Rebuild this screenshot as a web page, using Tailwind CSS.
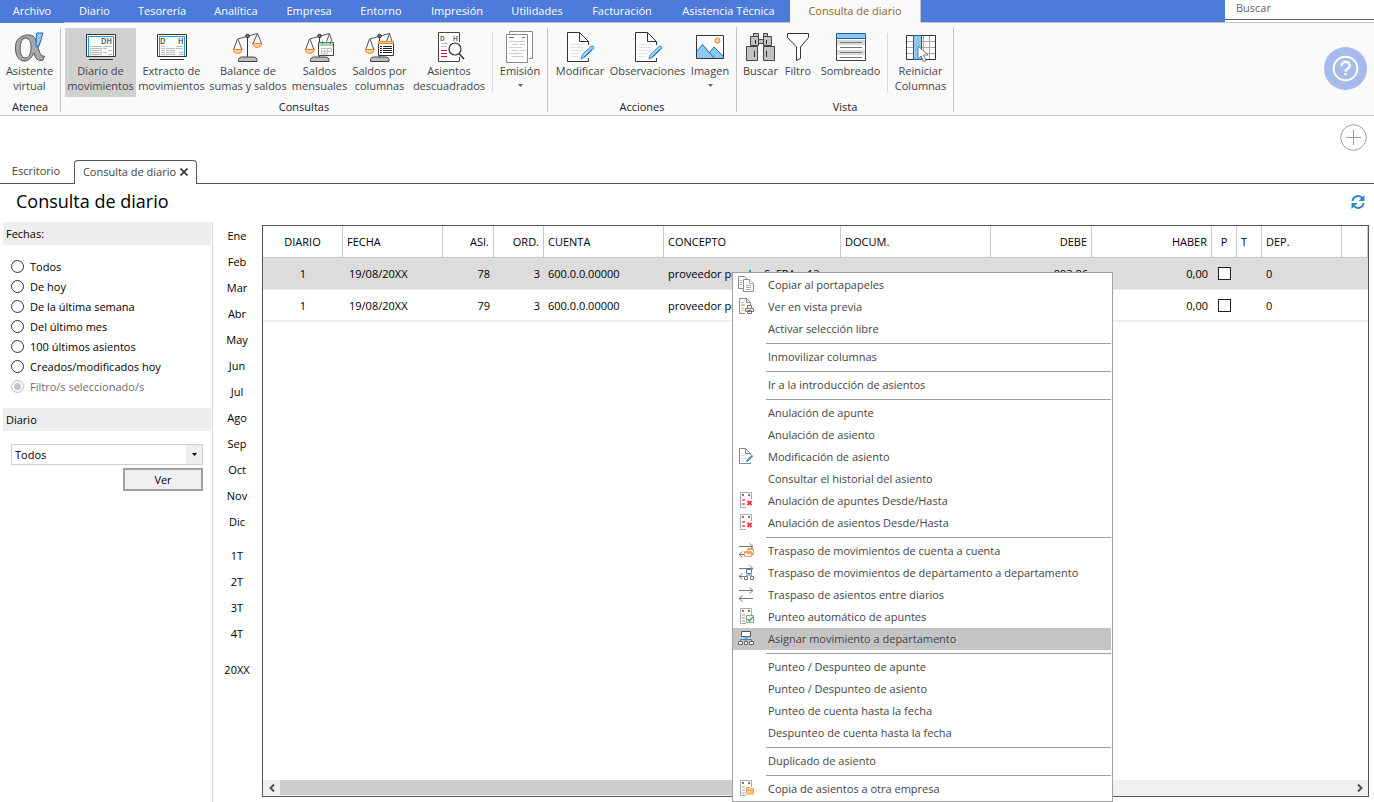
<!DOCTYPE html>
<html lang="es">
<head>
<meta charset="utf-8">
<title>Consulta de diario</title>
<script src="https://cdn.jsdelivr.net/npm/@tailwindcss/browser@4"></script>
</head>
<body class="bg-white text-black text-[11px] leading-[15px] font-['Open_Sans','Noto_Sans',sans-serif]">
<svg class="hidden" aria-hidden="true">
  <!-- shared drawings -->
  <symbol id="scale" viewBox="0 0 32 32">
    <path d="M15.5 6v20" stroke="#333" fill="none"/>
    <path d="M5.5 8 25.5 2.5M5.5 8 1.5 19M6 8l4 11" stroke="#555" fill="none"/>
    <circle cx="15.5" cy="5" r="1.8" fill="#777" stroke="#333"/>
    <path d="M1 18.5h9.5q-1 4-4.700 4T1 18.500z" fill="#fbd59a" stroke="#e8832c"/>
    <path d="M6.500 30.500v-2q1-2.500 3-2.500h12q3 0 3.500 2.500v2z" fill="#bdbdbd" stroke="#444"/>
  </symbol>
  <symbol id="docpen" viewBox="0 0 32 32">
    <path d="M24.500 14V10.500L15.500 1.500H3.500v29h21V27" fill="#fff" stroke="#333"/>
    <path d="M15.500 1.500v9h9" fill="none" stroke="#333"/>
    <path d="M6.500 13.500h13M6.500 16.500h13M6.500 19.500h12M6.500 22.500h9M6.500 25.500h8" stroke="#e2e2e2"/>
    <path d="M17 28l1.500-4.500 9-8.500q2-.5 2.500 2l-9 9z" fill="#a9d4f0" stroke="#2b88c9"/>
    <path d="M20 26l8-8" stroke="#2b88c9"/>
  </symbol>
  <symbol id="ledger" viewBox="0 0 16 16">
    <path d="M2.500 15.500V.5h11V7M2.500 15.500H8" fill="#fff" stroke="#aaa"/>
    <path d="M4 3h2M10 3h2" stroke="#777" stroke-width="2"/>
  </symbol>
  <symbol id="swap" viewBox="0 0 16 16">
    <path d="M1 4.500h14M11.500 1.500l3.500 3-3.500 3M15 12.500H1M4.500 9.500l-3.500 3 3.500 3" fill="none" stroke="#777"/>
  </symbol>
</svg>

<div class="relative flex min-h-screen flex-col">
  <!-- menu bar -->
  <header class="flex h-[23px] bg-[#4d7bdb] text-white">
    <nav class="flex flex-1 *:[button]:pb-[2px]" aria-label="Menú principal">
      <button class="w-16 border-b border-[#4d7bdb]">Archivo</button>
      <button class="w-[61px] border-b border-[#c4c4c4]">Diario</button>
      <button class="w-[74px] border-b border-[#c4c4c4]">Tesorería</button>
      <button class="w-[74px] border-b border-[#c4c4c4]">Analítica</button>
      <button class="w-[72px] border-b border-[#c4c4c4]">Empresa</button>
      <button class="w-[72px] border-b border-[#c4c4c4]">Entorno</button>
      <button class="w-20 border-b border-[#c4c4c4]">Impresión</button>
      <button class="w-20 border-b border-[#c4c4c4]">Utilidades</button>
      <button class="w-[90px] border-b border-[#c4c4c4]">Facturación</button>
      <button class="w-[123px] border-b border-[#c4c4c4]">Asistencia Técnica</button>
      <button class="w-[131px] border-r border-b border-r-[#c4c4c4] border-b-[#fafafa] bg-[#fafafa] text-[#8a6510]">Consulta de diario</button>
      <span class="flex-1 border-b border-[#c4c4c4]"></span>
    </nav>
    <div class="w-[149px] border-b border-[#c4c4c4] bg-white">
      <input type="text" aria-label="Buscar" placeholder="Buscar" class="block h-5 w-full border-b border-[#666] bg-white pb-1 pl-[11px] text-[#444] outline-none placeholder:text-[#666]">
    </div>
  </header>

  <!-- ribbon -->
  <div class="flex h-[93px] items-stretch border-b border-[#c4c4c4] bg-[#fafafa] pt-1 pb-[3px] text-[#444]">
    <section class="flex w-[61px] flex-col border-r border-[#c4c4c4]">
      <div class="flex pt-px">
        <button class="flex h-[69px] w-[59px] flex-col items-center pt-[3px]">
          <svg class="size-8 shrink-0" viewBox="0 0 32 32" fill="none">
            <path d="M19 5C16 3 5 3 2 12 0 22 4 30 10 30c5 0 8-4 10-8 1 5 4 9 9 7l1.500-4c-4 1-5-4-6.500-9l3-7-3-1-2 2q-1-4-3-5zM11 7c6 0 6 7 6 10 0 5-2 10-6 10-7 0-6-20 0-20z" fill="#a8a8a8" fill-rule="evenodd" stroke="#555"/>
            <path d="M22.500 2h6.500l-4 13h-3z" fill="#8fc7f0" stroke="#1d6fb5"/>
          </svg>
          Asistente<br>virtual
        </button>
      </div>
      <h2 class="mt-[2px] text-center text-[#222]">Atenea</h2>
    </section>

    <section class="flex w-[487px] flex-col border-r border-[#c4c4c4]">
      <div class="flex pt-px pl-1">
        <button class="flex h-[69px] w-[71px] flex-col items-center bg-[#d0d0d0] pt-[3px] whitespace-nowrap">
          <svg class="size-8 shrink-0" viewBox="0 0 32 32" fill="none">
            <path d="M1.500 3.500h29v22h-29z" fill="#fff" stroke="#333"/>
            <path d="M3.500 25V5.500h25V25" stroke="#1c9bd7"/>
            <text x="16" y="13" font-size="9" fill="#333" font-family="Liberation Mono">DH</text>
            <path d="M5 15.500h12M5 17.500h12M5 19.500h12M5 21.500h12M5 23.500h12M18 17.500h4M23 19.500h4M18 21.500h4M23 23.500h4M18 15.500h9" stroke="#bbb"/>
            <path d="M4 28.500h24" stroke="#333"/>
          </svg>
          Diario de<br>movimientos
        </button>
        <button class="flex h-[69px] w-[71px] flex-col items-center pt-[3px] whitespace-nowrap">
          <svg class="size-8 shrink-0" viewBox="0 0 32 32" fill="none">
            <path d="M1.500 3.500h29v22h-29z" fill="#fff" stroke="#333"/>
            <path d="M3.500 25V5.500h25V25" stroke="#1c9bd7"/>
            <text x="4" y="13" font-size="9" fill="#333" font-family="Liberation Mono">D</text>
            <text x="22" y="13" font-size="9" fill="#333" font-family="Liberation Mono">H</text>
            <path d="M5 15.500h4M5 17.500h4M5 19.500h4M5 21.500h4M5 23.500h4M10 17.500h9M10 19.500h9M10 21.500h9M10 23.500h9M20 17.500h7M20 15.500h7M23 21.500h4M23 23.500h4" stroke="#bbb"/>
            <path d="M4 28.500h24" stroke="#333"/>
          </svg>
          Extracto de<br>movimientos
        </button>
        <button class="flex h-[69px] w-[82px] flex-col items-center pt-[3px] whitespace-nowrap">
          <svg class="size-8 shrink-0" viewBox="0 0 32 32" fill="none">
            <use href="#scale"/>
            <path d="M25.500 2.500l-4.500 10M25.500 2.500l4 10" stroke="#555"/>
            <path d="M20.500 12.500H30q-1 4-4.700 4t-4.800-4z" fill="#fbd59a" stroke="#e8832c"/>
          </svg>
          Balance de<br>sumas y saldos
        </button>
        <button class="flex h-[69px] w-[61px] flex-col items-center pt-[3px] whitespace-nowrap">
          <svg class="size-8 shrink-0" viewBox="0 0 32 32" fill="none">
            <use href="#scale"/>
            <path d="M25.500 2.500l-3 8M25.500 2.500l2.500 8" stroke="#555"/>
            <path d="M14.500 12.500h15v12h-15z" fill="#fff" stroke="#444"/>
            <path d="M15 12h14v3H15z" fill="#a9d6b2"/>
            <path d="M14 11.500h16M18.500 10v3M26.500 10v3" stroke="#4f8a5b"/>
            <path d="M17 17.500h10M17 20.500h10M17 23h7M17.500 17v6M20.500 17v6M23.500 17v6M27.500 17v4" stroke="#c4c4c4"/>
          </svg>
          Saldos<br>mensuales
        </button>
        <button class="flex h-[69px] w-[59px] flex-col items-center pt-[3px] whitespace-nowrap">
          <svg class="size-8 shrink-0" viewBox="0 0 32 32" fill="none">
            <use href="#scale"/>
            <path d="M25.500 2.500l-3 8M25.500 2.500l2.500 8" stroke="#555"/>
            <path d="M14.500 12.500h15v12h-15z" fill="#fff" stroke="#333"/>
            <path d="M14.500 10.500h15v2h-15z" fill="#fbd59a" stroke="#e8832c"/>
            <path d="M16 15.500h2m1 0h9M16 17.500h2m1 0h9M16 19.500h2m1 0h9M16 21.500h2m1 0h9" stroke="#222"/>
          </svg>
          Saldos por<br>columnas
        </button>
        <button class="flex h-[69px] w-20 flex-col items-center pt-[3px] whitespace-nowrap">
          <svg class="size-8 shrink-0" viewBox="0 0 32 32" fill="none">
            <path d="M5.500 1.500h21v29h-21z" fill="#fff"/>
            <path d="M26.500 11V1.500h-21v29h21V26" stroke="#444"/>
            <text x="7" y="10" font-size="8" fill="#333" font-family="Liberation Mono">D</text>
            <text x="20" y="10" font-size="8" fill="#333" font-family="Liberation Mono">H</text>
            <path d="M8 12.500h7M8 15.500h6" stroke="#bbb"/>
            <path d="M8 19.500h6M8 22.500h6M8 25.500h6" stroke="#e0102c"/>
            <circle cx="22" cy="18" r="6" fill="#fff" stroke="#333" stroke-width="1.200"/>
            <path d="M26 22.500l5 5.500" stroke="#333" stroke-width="1.600"/>
          </svg>
          Asientos<br>descuadrados
        </button>
        <span class="mx-[3px] mt-[5px] h-[59px] w-px bg-[#dadada]"></span>
        <button class="flex h-[69px] w-12 flex-col items-center pt-[3px]">
          <svg class="size-8 shrink-0" viewBox="0 0 32 32" fill="none" stroke="#888">
            <path d="M5.500 4V.5h23v27H25" fill="#fff"/>
            <path d="M2.500 3.500h21v28h-21z" fill="#fff"/>
            <path d="M5 6.500h5M18 6.500h3" stroke="#777"/>
            <path d="M5 10.500h16M8 13.500h6m2 0h5M5 16.500h13M8 19.500h6m2 0h5M5 22.500h13M8 25.500h12" stroke="#ccc"/>
          </svg>
          Emisión
          <svg class="mt-[6px] h-[3px] w-[5px]" viewBox="0 0 5 3"><path d="M0 0h5L2.500 3z" fill="#666"/></svg>
        </button>
      </div>
      <h2 class="mt-[2px] text-center text-[#222]">Consultas</h2>
    </section>

    <section class="flex w-[189px] flex-col border-r border-[#c4c4c4]">
      <div class="flex pt-px pl-1">
        <button class="flex h-[69px] w-14 flex-col items-center pt-[3px]">
          <svg class="size-8 shrink-0" fill="none"><use href="#docpen"/></svg>
          Modificar
        </button>
        <button class="flex h-[69px] w-[79px] flex-col items-center pt-[3px]">
          <svg class="size-8 shrink-0" fill="none"><use href="#docpen"/></svg>
          Observaciones
        </button>
        <button class="flex h-[69px] w-[46px] flex-col items-center pt-[3px]">
          <svg class="size-8 shrink-0" viewBox="0 0 32 32" fill="none">
            <path d="M2.500 4.500h27v23h-27z" fill="#fff"/>
            <path d="M3 20l5.500-6.500 7 7.500 4.500-4.500 9.500 8V27.500H3z" fill="#8fc7f0"/>
            <path d="M3 20l5.500-6.500L20 27M16 21l4-5 9.500 9.500" stroke="#1d6fb5"/>
            <circle cx="23.500" cy="9.500" r="2.500" fill="#fbd59a" stroke="#e8732c"/>
            <path d="M2.500 4.500h27v23h-27z" stroke="#333"/>
          </svg>
          Imagen
          <svg class="mt-[6px] h-[3px] w-[5px]" viewBox="0 0 5 3"><path d="M0 0h5L2.500 3z" fill="#666"/></svg>
        </button>
      </div>
      <h2 class="mt-[2px] text-center text-[#222]">Acciones</h2>
    </section>

    <section class="flex w-[217px] flex-col border-r border-[#c4c4c4]">
      <div class="flex pt-px pl-[5px]">
        <button class="flex h-[69px] w-[37px] flex-col items-center pt-[3px]">
          <svg class="size-8 shrink-0" viewBox="0 0 32 32" fill="#c4c2c0" stroke="#444">
            <path d="M8.500 2.500h5v3h-5zM18.500 2.500h4v3h-4zM5.500 5.500h8v9h-8zM18.500 5.500h8v9h-8zM13.500 8.500h5v4h-5zM1.500 15.500h11v14h-11zM18.500 15.500h11v14h-11z"/>
            <path d="M10.500 9v4M21.500 9v4M9.500 20v6M21.500 20v6" stroke="#333"/>
          </svg>
          Buscar
        </button>
        <button class="flex h-[69px] w-[38px] flex-col items-center pt-[3px]">
          <svg class="size-8 shrink-0" viewBox="0 0 32 32" fill="#fff" stroke="#333">
            <path d="M5.500 2.500h21v4l-8 9.500v11.500l-4 2V16l-9-9.500z"/>
          </svg>
          Filtro
        </button>
        <button class="flex h-[69px] w-[67px] flex-col items-center pt-[3px]">
          <svg class="size-8 shrink-0" viewBox="0 0 32 32" fill="none">
            <path d="M1.500 7.500h29v22h-29z" fill="#fff" stroke="#444"/>
            <path d="M2 9h28v5H2zM2 19h28v5H2z" fill="#d9d9d9"/>
            <path d="M5 11.500h22M5 16.500h22M5 21.500h22M5 26.500h22" stroke="#777"/>
            <path d="M1.500 2.500h29v5h-29z" fill="#8fc7f0" stroke="#1565a8"/>
          </svg>
          Sombreado
        </button>
        <span class="mr-px ml-[3px] mt-[5px] h-[59px] w-px bg-[#dadada]"></span>
        <button class="flex h-[69px] w-[63px] flex-col items-center pt-[3px]">
          <svg class="size-8 shrink-0" viewBox="0 0 32 32" fill="none">
            <path d="M1.500 4.500h29v24h-29z" fill="#fff" stroke="#333"/>
            <path d="M2 10.500h28M2 16.500h28M2 22.500h28M18.500 5v23M24.500 5v23" stroke="#aaa"/>
            <path d="M8.500 4.500h8v24h-8z" fill="#8fc7f0" stroke="#1565a8"/>
            <path d="M13 15v13l3-3 2.500 5.500 2.500-1-2.500-5.500h4.500z" fill="#fff" stroke="#777"/>
          </svg>
          Reiniciar<br>Columnas
        </button>
      </div>
      <h2 class="mt-[2px] text-center text-[#222]">Vista</h2>
    </section>
    <button aria-label="Ayuda" class="mt-5 mr-[7px] ml-auto flex size-[43px] items-center justify-center self-start rounded-full bg-[#a6bbec]">
      <svg class="size-[27px]" viewBox="0 0 27 27" fill="none" stroke="#fff" stroke-width="2">
        <circle cx="13.500" cy="13.500" r="11.800"/>
        <path d="M9.700 11a4 3.800 0 1 1 6.400 2.600q-2.600 1-2.600 2.900" stroke-width="2.400"/>
        <path d="M13.500 18v2.200" stroke-width="2.400"/>
      </svg>
    </button>
  </div>

  <!-- document tabs -->
  <div class="flex h-[68px] items-end border-b border-[#555] text-[#444]">
    <button class="h-6 w-[72px] pb-[2px]">Escritorio</button>
    <div class="-mb-px ml-[2px] flex h-6 w-[123px] items-center justify-center gap-1 rounded-t border border-b-0 border-[#555] bg-white pb-[3px]">
      <span>Consulta de diario</span>
      <button aria-label="Cerrar pestaña" class="pt-px"><svg class="size-2" viewBox="0 0 8 8"><path d="M.5.5l7 7M7.500.5l-7 7" stroke="#333" stroke-width="1.600"/></svg></button>
    </div>
    <button aria-label="Añadir" class="mt-2 mr-[7px] ml-auto self-start">
      <svg class="size-[27px]" viewBox="0 0 27 27" fill="none" stroke="#a0a0a0"><circle cx="13.500" cy="13.500" r="12.800"/><path d="M6 13.500h15M13.500 6v15"/></svg>
    </button>
  </div>

  <div class="flex h-[38px] items-start justify-between pr-2 pl-4">
    <h1 class="pt-1 text-[18px] leading-[27px]">Consulta de diario</h1>
    <button aria-label="Actualizar" class="mt-[10px]">
      <svg class="size-4" viewBox="0 0 16 16" fill="none" stroke="#2b88c9" stroke-width="2">
        <path d="M2.500 7A5.500 5.500 0 0 1 12.500 4.500M13.500 9A5.500 5.500 0 0 1 3.500 11.500"/>
        <path d="M14.500 1v6h-6zM1.500 15V9h6z" fill="#2b88c9" stroke="none"/>
      </svg>
    </button>
  </div>

  <main class="flex flex-1">
    <!-- filters -->
    <aside class="w-[213px] border-r border-[#d4d4d4] pr-px pl-[3px]">
      <fieldset>
        <legend class="block h-[23px] w-full bg-[#eee] px-[3px] leading-[23px]">Fechas:</legend>
        <div class="flex flex-col pt-[11px] pl-2">
          <label class="flex h-5 items-center gap-[6px]"><input type="radio" name="fechas" class="size-[13px] appearance-none rounded-full border border-[#333] bg-white">Todos</label>
          <label class="flex h-5 items-center gap-[6px]"><input type="radio" name="fechas" class="size-[13px] appearance-none rounded-full border border-[#333] bg-white">De hoy</label>
          <label class="flex h-5 items-center gap-[6px]"><input type="radio" name="fechas" class="size-[13px] appearance-none rounded-full border border-[#333] bg-white">De la última semana</label>
          <label class="flex h-5 items-center gap-[6px]"><input type="radio" name="fechas" class="size-[13px] appearance-none rounded-full border border-[#333] bg-white">Del último mes</label>
          <label class="flex h-5 items-center gap-[6px]"><input type="radio" name="fechas" class="size-[13px] appearance-none rounded-full border border-[#333] bg-white">100 últimos asientos</label>
          <label class="flex h-5 items-center gap-[6px]"><input type="radio" name="fechas" class="size-[13px] appearance-none rounded-full border border-[#333] bg-white">Creados/modificados hoy</label>
          <label class="flex h-5 items-center gap-[6px] text-[#6d6d6d]"><input type="radio" name="fechas" checked disabled class="size-[13px] appearance-none rounded-full border border-[#c4c4c4] bg-[#c4c4c4] shadow-[inset_0_0_0_2px_#fff]">Filtro/s seleccionado/s</label>
        </div>
      </fieldset>
      <h2 class="mt-3 h-[23px] bg-[#eee] px-[3px] leading-[23px]"><label for="diario">Diario</label></h2>
      <div class="flex flex-col items-end gap-[3px] pt-[13px] pr-2 pl-2">
        <div class="relative w-full">
          <select id="diario" class="block h-[21px] w-full appearance-none border border-[#d0d0d0] bg-white pl-[3px] outline-none"><option>Todos</option></select>
          <span class="pointer-events-none absolute inset-y-px right-px flex w-4 items-center justify-center bg-[#eee]"><svg class="h-[3px] w-[5px]" viewBox="0 0 5 3"><path d="M0 0h5L2.500 3z"/></svg></span>
        </div>
        <button class="h-[23px] w-20 border-2 border-[#a0a0a0] bg-[#f0f0f0]">Ver</button>
      </div>
    </aside>

    <!-- periods -->
    <nav class="flex w-12 flex-col" aria-label="Periodos">
      <button class="h-[26px]">Ene</button>
      <button class="h-[26px]">Feb</button>
      <button class="h-[26px]">Mar</button>
      <button class="h-[26px]">Abr</button>
      <button class="h-[26px]">May</button>
      <button class="h-[26px]">Jun</button>
      <button class="h-[26px]">Jul</button>
      <button class="h-[26px]">Ago</button>
      <button class="h-[26px]">Sep</button>
      <button class="h-[26px]">Oct</button>
      <button class="h-[26px]">Nov</button>
      <button class="h-[26px]">Dic</button>
      <button class="mt-2 h-[26px]">1T</button>
      <button class="h-[26px]">2T</button>
      <button class="h-[26px]">3T</button>
      <button class="h-[26px]">4T</button>
      <button class="mt-[10px] h-[26px]">20XX</button>
    </nav>

    <!-- journal -->
    <section class="mt-[3px] mr-[5px] mb-[5px] ml-px flex min-w-0 flex-1 flex-col border border-[#555]">
      <table class="w-full table-fixed border-separate border-spacing-0 text-left">
        <colgroup><col class="w-20"><col class="w-[100px]"><col class="w-[51px]"><col class="w-[50px]"><col class="w-[120px]"><col class="w-[177px]"><col class="w-[150px]"><col class="w-[101px]"><col class="w-[120px]"><col class="w-[25px]"><col class="w-[25px]"><col class="w-20"><col></colgroup>
        <thead>
          <tr class="h-8 *:border-r *:border-b *:border-[#c8c8c8] *:px-1 *:font-normal">
            <th class="text-center">DIARIO</th><th>FECHA</th><th class="text-right">ASI.</th><th class="text-right">ORD.</th><th>CUENTA</th><th>CONCEPTO</th><th>DOCUM.</th><th class="text-right">DEBE</th><th class="text-right">HABER</th><th class="text-center">P</th><th>T</th><th>DEP.</th><th class="border-r-0"></th>
          </tr>
        </thead>
        <tbody>
          <tr class="h-8 bg-[#dcdcdc] *:border-b *:border-[#eee] *:px-1 *:whitespace-nowrap">
            <td class="text-center">1</td><td class="pl-[6px]!">19/08/20XX</td><td class="text-right">78</td><td class="text-right">3</td><td>600.0.0.00000</td><td>proveedor prueba S. FRA. : 13</td><td></td><td class="text-right">893,86</td><td class="text-right">0,00</td>
            <td class="pl-[6px]!"><input type="checkbox" aria-label="Punteado" class="block size-[13px] appearance-none border border-[#222] bg-white"></td><td></td><td>0</td><td></td>
          </tr>
          <tr class="h-8 *:border-b-2 *:border-[#eee] *:px-1 *:whitespace-nowrap">
            <td class="text-center">1</td><td class="pl-[6px]!">19/08/20XX</td><td class="text-right">79</td><td class="text-right">3</td><td>600.0.0.00000</td><td>proveedor prueba</td><td></td><td></td><td class="text-right">0,00</td>
            <td class="pl-[6px]!"><input type="checkbox" aria-label="Punteado" class="block size-[13px] appearance-none border border-[#222] bg-white"></td><td></td><td>0</td><td></td>
          </tr>
        </tbody>
      </table>
      <div class="mt-auto flex h-4 bg-[#f0f0f0] pb-px">
        <button aria-label="Desplazar a la izquierda" class="flex w-[17px] items-center justify-center"><svg class="h-2 w-[6px]" viewBox="0 0 6 8" fill="none"><path d="M5 .5L1.500 4 5 7.500" stroke="#444" stroke-width="1.800"/></svg></button>
        <span class="w-3/4 bg-[#cdcdcd]"></span>
        <button aria-label="Desplazar a la derecha" class="ml-auto flex w-[17px] items-center justify-center"><svg class="h-2 w-[6px]" viewBox="0 0 6 8" fill="none"><path d="M1 .5L4.500 4 1 7.500" stroke="#444" stroke-width="1.800"/></svg></button>
      </div>
    </section>
  </main>

  <!-- context menu -->
  <div role="menu" class="absolute top-[272px] left-[732px] flex w-[381px] flex-col border border-[#a0a0a0] bg-white py-px text-[#444] *:[button]:flex *:[button]:h-[22px] *:[button]:shrink-0 *:[button]:items-center *:[button]:gap-[14px] *:[button]:pb-[2px] *:[button]:pl-[5px] *:[hr]:mt-[3px] *:[hr]:mb-[2px] *:[hr]:mr-px *:[hr]:ml-[33px] *:[hr]:h-px *:[hr]:border-0 *:[hr]:bg-[#a0a0a0]">
    <button role="menuitem"><svg class="size-4" viewBox="0 0 16 16" fill="#fff" stroke="#8c8c8c"><path d="M.5.5h6l3 3v9h-9z"/><path d="M5.500 3.500h6l4 4v8h-10z"/><path d="M11.500 3.500v4h4M8 9.500h5M8 11.500h5M8 13.500h5M2 4.500h2M2 6.500h2M2 8.500h2" stroke="#aaa"/></svg>Copiar al portapapeles</button>
    <button role="menuitem"><svg class="size-4" viewBox="0 0 16 16" fill="none" stroke="#8c8c8c"><path d="M7 15.500H1.500V.5h7l4 4V8" fill="#fff"/><path d="M8.500.5v4h4"/><path d="M3 4.500h3M3 7.500h4M3 10.500h3" stroke="#f0b878"/><path d="M3 6.500h4M3 12.500h3" stroke="#ccc"/><path d="M7.500 10.500h8v3h-8zM9.500 7.500h4v3h-4zM9.500 12.500h4v3h-4z" fill="#fff" stroke="#777"/></svg>Ver en vista previa</button>
    <button role="menuitem"><span class="size-4"></span>Activar selección libre</button>
    <hr>
    <button role="menuitem"><span class="size-4"></span>Inmovilizar columnas</button>
    <hr>
    <button role="menuitem"><span class="size-4"></span>Ir a la introducción de asientos</button>
    <hr>
    <button role="menuitem"><span class="size-4"></span>Anulación de apunte</button>
    <button role="menuitem"><span class="size-4"></span>Anulación de asiento</button>
    <button role="menuitem"><svg class="size-4" viewBox="0 0 16 16" fill="none" stroke="#888"><path d="M12.500 7V5.500l-5-5h-6v15h11V14" fill="#fff"/><path d="M7.500.5v5h5"/><path d="M3 7.500h6M3 10.500h5M3 12.500h3" stroke="#e2e2e2"/><path d="M8.500 13.500l6-6" stroke="#3c97d6" stroke-width="2.200"/></svg>Modificación de asiento</button>
    <button role="menuitem"><span class="size-4"></span>Consultar el historial del asiento</button>
    <button role="menuitem"><svg class="size-4" viewBox="0 0 16 16" fill="none"><use href="#ledger"/><path d="M4 8h3M4 12h3" stroke="#ee7d85" stroke-width="2"/><path d="M9.500 9l4 4M13.500 9l-4 4" stroke="#e33" stroke-width="1.800"/></svg>Anulación de apuntes Desde/Hasta</button>
    <button role="menuitem"><svg class="size-4" viewBox="0 0 16 16" fill="none"><use href="#ledger"/><path d="M4 8h3M4 12h3" stroke="#ee7d85" stroke-width="2"/><path d="M9.500 9l4 4M13.500 9l-4 4" stroke="#e33" stroke-width="1.800"/></svg>Anulación de asientos Desde/Hasta</button>
    <hr>
    <button role="menuitem"><svg class="size-4" viewBox="0 0 16 16" fill="none"><use href="#swap"/><path d="M9.500 6.500h6v5h-6zM6.500 9.500h7v5h-7z" fill="#fff4e4" stroke="#eea060"/><path d="M7 10.500h6M10 7.500h5" stroke="#eea060"/></svg>Traspaso de movimientos de cuenta a cuenta</button>
    <button role="menuitem"><svg class="size-4" viewBox="0 0 16 16" fill="none"><use href="#swap"/><path d="M6 8h10v8H6z" fill="#fff"/><path d="M8.500 5.500h5v4h-5z" fill="#fff" stroke="#777"/><path d="M8.500 12.500v-1.500h5v1.500M11 9.500V11" stroke="#3c97d6"/><path d="M6.500 12.500h3v3h-3zM12.500 12.500h3v3h-3z" fill="#fff" stroke="#777"/></svg>Traspaso de movimientos de departamento a departamento</button>
    <button role="menuitem"><svg class="size-4"><use href="#swap"/></svg>Traspaso de asientos entre diarios</button>
    <button role="menuitem"><svg class="size-4" viewBox="0 0 16 16" fill="none"><use href="#ledger"/><path d="M4 7h3M4 10h3M4 13h3" stroke="#ccc" stroke-width="2"/><path d="M8.500 7.500h7v7h-7z" fill="#fff" stroke="#999"/><path d="M9.500 11l2 2 3.500-4" stroke="#37a85a" stroke-width="1.400"/></svg>Punteo automático de apuntes</button>
    <button role="menuitem" class="mr-px bg-[#c4c4c4]"><svg class="size-4" viewBox="0 0 16 16" fill="none"><path d="M3.500 1.500h9v5h-9z" fill="#fff" stroke="#555"/><path d="M8 7v2.500M2.500 11V9.500h11V11M8 9.500V11" stroke="#2b88c9"/><path d="M.5 11.500h4v3h-4zM6.500 11.500h3v3h-3zM11.500 11.500h4v3h-4z" fill="#fff" stroke="#666"/></svg>Asignar movimiento a departamento</button>
    <hr>
    <button role="menuitem"><span class="size-4"></span>Punteo / Despunteo de apunte</button>
    <button role="menuitem"><span class="size-4"></span>Punteo / Despunteo de asiento</button>
    <button role="menuitem"><span class="size-4"></span>Punteo de cuenta hasta la fecha</button>
    <button role="menuitem"><span class="size-4"></span>Despunteo de cuenta hasta la fecha</button>
    <hr>
    <button role="menuitem"><span class="size-4"></span>Duplicado de asiento</button>
    <hr>
    <button role="menuitem"><svg class="size-4" viewBox="0 0 16 16" fill="none"><use href="#ledger"/><path d="M4 7h3M4 10h3M4 13h3" stroke="#ccc" stroke-width="2"/><path d="M8.500 7.500h3l1 1h3v5.500h-7z" fill="#fbd08a" stroke="#ee9a50"/><path d="M9 10.500h6" stroke="#ee9a50"/></svg>Copia de asientos a otra empresa</button>
  </div>
</div>
</body>
</html>
